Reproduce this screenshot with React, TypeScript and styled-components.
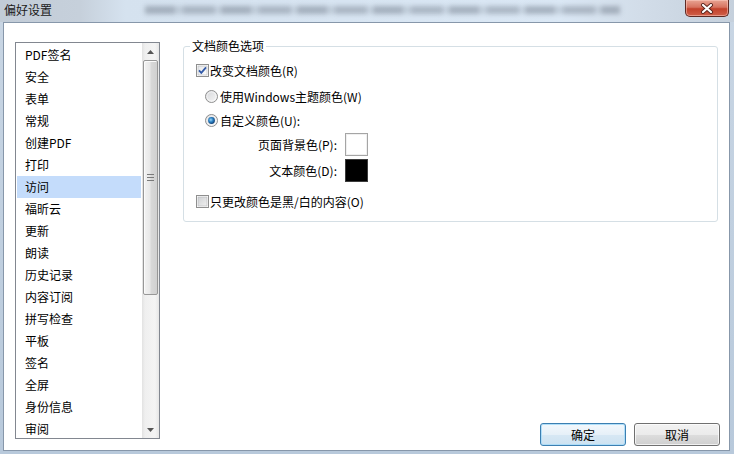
import React from "react";
import styled, { createGlobalStyle } from "styled-components";

const GlobalStyle = createGlobalStyle`
  html, body {
    margin: 0;
    padding: 0;
  }
  body {
    width: 734px;
    height: 454px;
    overflow: hidden;
    background: #bfcfe0;
  }
  * {
    box-sizing: border-box;
  }
`;

const Window = styled.div`
  width: 734px;
  height: 454px;
  display: flex;
  flex-direction: column;
  background: linear-gradient(#c9d6e4, #b8c9db);
  font-family: "Noto Sans CJK SC", "Noto Sans", sans-serif;
  font-size: 12px;
  color: #000;
`;

const TitleBar = styled.div`
  height: 22px;
  flex: none;
  display: flex;
  align-items: flex-start;
  background: linear-gradient(
    90deg,
    #c2ccd7 0,
    #c6d0db 80px,
    #d5e2ef 125px,
    #dbe8f5 560px,
    #d2dde9 640px,
    #c5d0dc 100%
  );
`;

const Title = styled.span`
  margin: 2px 0 0 4px;
  line-height: 15px;
  color: #1a1a1a;
`;

const Glass = styled.div`
  margin: 6px 0 0 93px;
  width: 475px;
  height: 8px;
  background: repeating-linear-gradient(
    90deg,
    rgba(100, 110, 125, 0.45) 0 30px,
    rgba(100, 110, 125, 0.2) 30px 38px,
    rgba(100, 110, 125, 0.4) 38px 70px,
    rgba(100, 110, 125, 0.15) 70px 76px
  );
  filter: blur(2.5px);
`;

const CloseButton = styled.div`
  margin: 0 5px 0 auto;
  width: 44px;
  height: 17px;
  border: 1px solid #5e2a24;
  border-top: none;
  border-radius: 0 0 5px 5px;
  background: linear-gradient(#e8a493 0, #d77360 45%, #c2412b 55%, #d0604a 100%);
  box-shadow: inset 0 0 0 1px rgba(255, 210, 200, 0.5);
  display: flex;
  align-items: center;
  justify-content: center;
`;

const Client = styled.div`
  flex: 1;
  margin: 0 4px 3px 3px;
  border: 1px solid #8797aa;
  background: #fff;
  display: grid;
  grid-template-columns: 145px 1fr;
  column-gap: 23px;
  padding: 19px 9px 4px 11px;
`;

const ListBox = styled.div`
  height: 397px;
  border: 1px solid #828790;
  display: flex;
  overflow: hidden;
`;

const Items = styled.div`
  flex: 1;
  padding-top: 1px;
  overflow: hidden;
`;

const Item = styled.div<{ $selected?: boolean }>`
  height: 22px;
  line-height: 22px;
  margin: 0 1px;
  padding-left: 8px;
  white-space: nowrap;
  background: ${(p) => (p.$selected ? "#c4dcfb" : "transparent")};
`;

const ScrollBar = styled.div`
  width: 17px;
  flex: none;
  display: flex;
  flex-direction: column;
  background: linear-gradient(90deg, #e2e2e2, #efefef 3px, #f4f4f4 13px, #e6e6e6);
`;

const Arrow = styled.div`
  height: 17px;
  flex: none;
  display: flex;
  align-items: center;
  justify-content: center;
`;

const Thumb = styled.div`
  height: 235px;
  flex: none;
  margin: 0 1px;
  border: 1px solid #979797;
  border-radius: 2px;
  background: linear-gradient(90deg, #f3f3f3, #e8e8e8 45%, #d8d8d8 55%, #d0d0d0);
  box-shadow: inset 1px 1px 0 #fbfbfb;
  display: flex;
  align-items: center;
  justify-content: center;
`;

const Track = styled.div`
  flex: 1;
`;

const Right = styled.div`
  display: flex;
  flex-direction: column;
  min-width: 0;
`;

const Group = styled.fieldset`
  margin: -3px 2px 0 0;
  padding: 0 0 10px 6px;
  border: 1px solid #d5dfe5;
  border-radius: 3px;
  min-width: 0;
`;

const Legend = styled.legend`
  padding: 0 2px;
  line-height: 14px;
`;

const Body = styled.div`
  padding-left: 6px;
`;

const OptionRow = styled.div<{ $top: number; $indent?: number; $gap?: number }>`
  display: flex;
  align-items: center;
  gap: ${(p) => p.$gap ?? 1}px;
  height: 19px;
  margin-top: ${(p) => p.$top}px;
  padding-left: ${(p) => p.$indent ?? 0}px;
  white-space: nowrap;
`;

const ColorRow = styled.div`
  display: grid;
  grid-template-columns: 117px 23px;
  column-gap: 8px;
  align-items: center;
  margin: 3px 0 0 24px;
`;

const ColorLabel = styled.span`
  text-align: right;
  white-space: nowrap;
`;

const Swatch = styled.div<{ $color: string }>`
  width: 23px;
  height: 23px;
  border: 1px solid ${(p) => (p.$color === "#000" ? "#3c3c3c" : "#a5a5a5")};
  background: ${(p) => p.$color};
  box-shadow: ${(p) => (p.$color === "#000" ? "none" : "inset 0 0 0 1px #f0f0f0")};
`;

const Footer = styled.div`
  margin-top: auto;
  display: flex;
  justify-content: flex-end;
  gap: 8px;
`;

const Button = styled.div<{ $default?: boolean }>`
  width: 86px;
  height: 23px;
  border: 1px solid ${(p) => (p.$default ? "#3c7fb1" : "#707070")};
  border-radius: 3px;
  background: ${(p) =>
    p.$default
      ? "linear-gradient(#f3f8fc, #e6f0f8 50%, #d7e8f4 50%, #cde2f1)"
      : "linear-gradient(#f2f2f2, #ebebeb 50%, #dddddd 50%, #cfcfcf)"};
  box-shadow: inset 0 0 0 1px
    ${(p) => (p.$default ? "rgba(170, 220, 248, 0.9)" : "rgba(255, 255, 255, 0.7)")};
  display: flex;
  align-items: center;
  justify-content: center;
  line-height: 14px;
`;

const CheckBox = ({ checked }: { checked?: boolean }) => (
  <svg width="13" height="13" viewBox="0 0 13 13">
    <defs>
      <linearGradient id={checked ? "cbOn" : "cbOff"} x1="0" y1="0" x2="1" y2="1">
        <stop offset="0" stopColor={checked ? "#e4e6e9" : "#cfd1d4"} />
        <stop offset="1" stopColor={checked ? "#fdfdfd" : "#f0f0f0"} />
      </linearGradient>
    </defs>
    <rect x="0.5" y="0.5" width="12" height="12" fill="#fff" stroke="#8f8f8f" />
    <rect
      x="2"
      y="2"
      width="9"
      height="9"
      fill={`url(#${checked ? "cbOn" : "cbOff"})`}
      stroke="#b4b6b9"
      strokeWidth="0.6"
    />
    {checked && (
      <path d="M3 6.3 L5.3 8.8 L10 3.4" fill="none" stroke="#3159a8" strokeWidth="1.8" />
    )}
  </svg>
);

const Radio = ({ checked }: { checked?: boolean }) => (
  <svg width="13" height="13" viewBox="0 0 13 13">
    <defs>
      <linearGradient id="rdBg" x1="0" y1="0" x2="1" y2="1">
        <stop offset="0" stopColor="#d4d6d9" />
        <stop offset="1" stopColor="#f7f7f7" />
      </linearGradient>
      <radialGradient id="rdDot" cx="0.4" cy="0.4" r="0.6">
        <stop offset="0" stopColor="#9fd6f6" />
        <stop offset="0.5" stopColor="#2f86c8" />
        <stop offset="1" stopColor="#10437a" />
      </radialGradient>
    </defs>
    <circle cx="6.5" cy="6.5" r="6" fill="url(#rdBg)" stroke="#8f8f8f" />
    <circle cx="6.5" cy="6.5" r="4.6" fill="none" stroke="#fff" strokeWidth="0.8" opacity="0.7" />
    {checked && <circle cx="6.5" cy="6.5" r="3.4" fill="url(#rdDot)" />}
  </svg>
);

const ArrowGlyph = ({ down }: { down?: boolean }) => (
  <svg width="7" height="4" viewBox="0 0 7 4">
    <path d={down ? "M0 0 H7 L3.5 4 Z" : "M0 4 H7 L3.5 0 Z"} fill="#555" />
  </svg>
);

const Grip = () => (
  <svg width="7" height="7" viewBox="0 0 7 7">
    {[0.5, 3.5, 6.5].map((y) => (
      <path key={y} d={`M0 ${y} H7`} stroke="#7a7a7a" strokeWidth="1" />
    ))}
  </svg>
);

const CloseGlyph = () => (
  <svg width="14" height="11" viewBox="0 0 14 11">
    <path d="M3 2 L11 9 M11 2 L3 9" stroke="#5a241c" strokeWidth="4" strokeLinecap="round" />
    <path d="M3 2 L11 9 M11 2 L3 9" stroke="#fff" strokeWidth="2.2" strokeLinecap="round" />
  </svg>
);

const categories = [
  "PDF签名",
  "安全",
  "表单",
  "常规",
  "创建PDF",
  "打印",
  "访问",
  "福昕云",
  "更新",
  "朗读",
  "历史记录",
  "内容订阅",
  "拼写检查",
  "平板",
  "签名",
  "全屏",
  "身份信息",
  "审阅",
];

export default function App() {
  const selected = "访问";

  return (
    <>
      <GlobalStyle />
      <Window>
        <TitleBar>
          <Title>偏好设置</Title>
          <Glass />
          <CloseButton>
            <CloseGlyph />
          </CloseButton>
        </TitleBar>
        <Client>
          <ListBox>
            <Items>
              {categories.map((name) => (
                <Item key={name} $selected={name === selected}>
                  {name}
                </Item>
              ))}
            </Items>
            <ScrollBar>
              <Arrow>
                <ArrowGlyph />
              </Arrow>
              <Thumb>
                <Grip />
              </Thumb>
              <Track />
              <Arrow>
                <ArrowGlyph down />
              </Arrow>
            </ScrollBar>
          </ListBox>
          <Right>
            <Group>
              <Legend>文档颜色选项</Legend>
              <Body>
                <OptionRow $top={8}>
                  <CheckBox checked />
                  改变文档颜色(R)
                </OptionRow>
                <OptionRow $top={7} $indent={9} $gap={2}>
                  <Radio />
                  使用Windows主题颜色(W)
                </OptionRow>
                <OptionRow $top={5} $indent={9} $gap={2}>
                  <Radio checked />
                  自定义颜色(U):
                </OptionRow>
                <ColorRow>
                  <ColorLabel>页面背景色(P):</ColorLabel>
                  <Swatch $color="#fff" />
                </ColorRow>
                <ColorRow>
                  <ColorLabel>文本颜色(D):</ColorLabel>
                  <Swatch $color="#000" />
                </ColorRow>
                <OptionRow $top={10}>
                  <CheckBox />
                  只更改颜色是黑/白的内容(O)
                </OptionRow>
              </Body>
            </Group>
            <Footer>
              <Button $default>确定</Button>
              <Button>取消</Button>
            </Footer>
          </Right>
        </Client>
      </Window>
    </>
  );
}
